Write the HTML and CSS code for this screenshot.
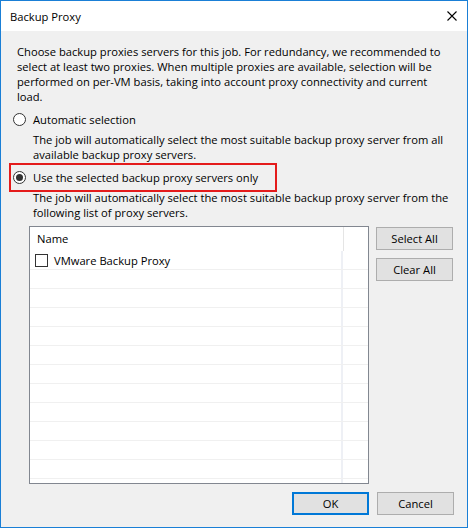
FILE: index.html
```html
<!DOCTYPE html>
<html>
<head>
<meta charset="utf-8">
<title>Backup Proxy</title>
<link rel="stylesheet" href="styles.css">
</head>
<body>
<div class="window">
  <div class="titlebar">
    <span class="title">Backup Proxy</span>
    <svg class="close" width="10" height="10" viewBox="0 0 10 10"><path d="M0.5 0.5L9.5 9.5M9.5 0.5L0.5 9.5" stroke="#000" stroke-width="1.1" fill="none"/></svg>
  </div>
  <div class="content">
    <p class="intro">Choose backup proxies servers for this job. For redundancy, we recommended to select at least two proxies. When multiple proxies are available, selection will be performed on per-VM basis, taking into account proxy connectivity and current load.</p>
    <div class="option">
      <span class="radio"></span>
      <span class="label">Automatic selection</span>
    </div>
    <p class="desc">The job will automatically select the most suitable backup proxy server from all available backup proxy servers.</p>
    <div class="option highlight">
      <span class="radio checked"></span>
      <span class="label">Use the selected backup proxy servers only</span>
    </div>
    <p class="desc desc-tight">The job will automatically select the most suitable backup proxy server from the following list of proxy servers.</p>
    <div class="list-area">
      <div class="listbox">
        <div class="list-header">
          <div class="col-name">Name</div>
          <div class="col-rest"></div>
        </div>
        <div class="list-row">
          <div class="col-name"><span class="checkbox"></span>VMware Backup Proxy</div>
          <div class="col-rest"></div>
        </div>
        <div class="list-row"><div class="col-name"></div><div class="col-rest"></div></div>
        <div class="list-row"><div class="col-name"></div><div class="col-rest"></div></div>
        <div class="list-row"><div class="col-name"></div><div class="col-rest"></div></div>
        <div class="list-row"><div class="col-name"></div><div class="col-rest"></div></div>
        <div class="list-row"><div class="col-name"></div><div class="col-rest"></div></div>
        <div class="list-row"><div class="col-name"></div><div class="col-rest"></div></div>
        <div class="list-row"><div class="col-name"></div><div class="col-rest"></div></div>
        <div class="list-row"><div class="col-name"></div><div class="col-rest"></div></div>
        <div class="list-row"><div class="col-name"></div><div class="col-rest"></div></div>
        <div class="list-row"><div class="col-name"></div><div class="col-rest"></div></div>
        <div class="list-row"><div class="col-name"></div><div class="col-rest"></div></div>
        <div class="list-row"><div class="col-name"></div><div class="col-rest"></div></div>
      </div>
      <div class="side-buttons">
        <button class="btn">Select All</button>
        <button class="btn">Clear All</button>
      </div>
    </div>
    <div class="footer">
      <button class="btn btn-default">OK</button>
      <button class="btn">Cancel</button>
    </div>
  </div>
</div>
</body>
</html>
```

FILE: styles.css
```css
html, body {
  margin: 0;
  padding: 0;
  background: #ffffff;
}

body {
  font-family: "Open Sans", "Noto Sans", sans-serif;
  font-size: 11.2px;
  color: #000;
}

.window {
  width: 466px;
  height: 526px;
  border: 1px solid #1a7fd6;
  display: flex;
  flex-direction: column;
  background: #f0f0f0;
}

.titlebar {
  height: 30px;
  background: #ffffff;
  display: flex;
  align-items: center;
  justify-content: space-between;
  padding: 0 10px 0 9px;
  flex: none;
}

.title {
  line-height: 15px;
  margin-top: 1px;
}

.close {
  display: block;
}

.content {
  flex: 1;
  padding: 13px 13px 0 12px;
  display: flex;
  flex-direction: column;
}

.intro {
  margin: 0 0 0 4px;
  line-height: 15px;
  width: 432px;
}

.option {
  display: flex;
  align-items: center;
  height: 15px;
  margin-top: 8px;
}

.radio {
  width: 11px;
  height: 11px;
  border: 1px solid #333;
  border-radius: 50%;
  background: #fff;
  flex: none;
  position: relative;
  margin-right: 7px;
}

.radio.checked::after {
  content: "";
  position: absolute;
  left: 2px;
  top: 2px;
  width: 7px;
  height: 7px;
  border-radius: 50%;
  background: #333;
}

.desc {
  margin: 5px 0 0 20px;
  line-height: 15px;
}

.highlight {
  margin: 1px 0 0 -4px;
  width: 262px;
  height: 25px;
  border: 2px solid #e41b1b;
  padding-left: 2px;
}

.desc-tight {
  margin-top: -2px;
}

.list-area {
  display: flex;
  gap: 7px;
  margin: 6px 0 0 16px;
}

.listbox {
  width: 338px;
  height: 256px;
  border: 1px solid #828790;
  background: #fff;
  overflow: hidden;
}

.list-header {
  display: flex;
  height: 24px;
}

.list-header .col-name {
  width: 314px;
  padding-left: 7px;
  line-height: 24px;
  border-right: 1px solid #e5e5e5;
}

.list-row {
  display: flex;
  height: 18px;
  border-bottom: 1px solid #f0f0f0;
}

.col-name {
  width: 313px;
  display: flex;
  align-items: center;
  padding-left: 5px;
  box-sizing: border-box;
}

.list-row .col-name {
  border-right: 2px solid #eef0f5;
}

.col-rest {
  flex: 1;
}

.checkbox {
  width: 11px;
  height: 11px;
  border: 1px solid #333;
  background: #fff;
  margin-right: 6px;
  flex: none;
}

.side-buttons {
  display: flex;
  flex-direction: column;
  gap: 8px;
  margin-top: 1px;
}

.btn {
  width: 77px;
  height: 23px;
  font-family: "Open Sans", "Noto Sans", sans-serif;
  font-size: 11.2px;
  color: #000;
  background: #e1e1e1;
  border: 1px solid #adadad;
  padding: 0;
  margin: 0;
  line-height: 15px;
}

.btn-default {
  border: 2px solid #0078d7;
}

.footer {
  display: flex;
  justify-content: flex-end;
  gap: 8px;
  margin-top: 8px;
}
```
